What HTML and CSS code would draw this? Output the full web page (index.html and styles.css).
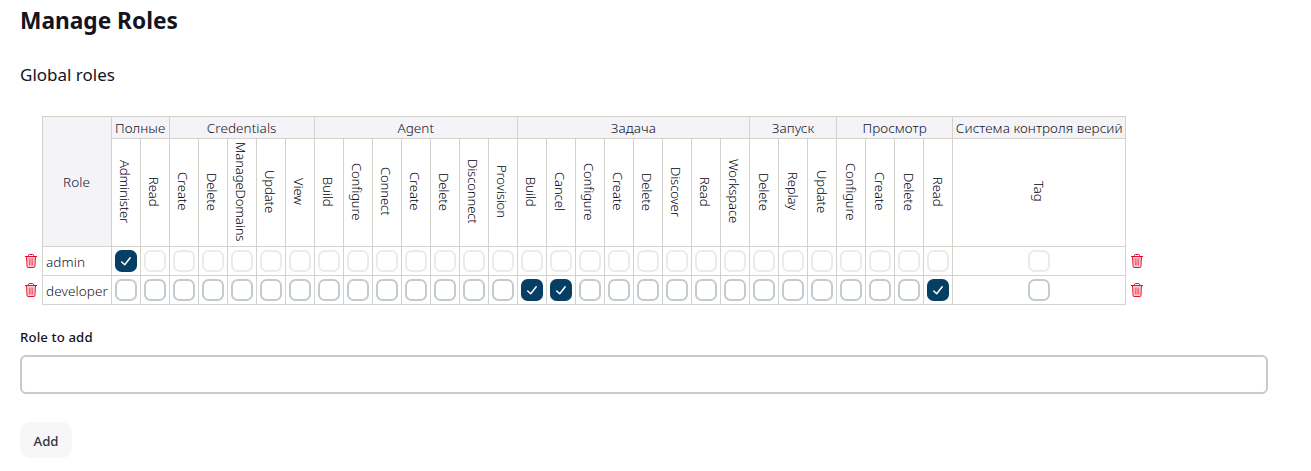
FILE: index.html
```html
<!DOCTYPE html>
<html lang="ru">
<head>
<meta charset="utf-8">
<title>Manage Roles</title>
<link rel="stylesheet" href="styles.css">
</head>
<body>
<svg class="defs" width="0" height="0">
  <symbol id="trash" viewBox="0 0 12 16">
    <path d="M2 3.500h8l-.5 10.500h-7z" fill="#e6001f" fill-opacity=".2"/>
    <path d="M4.200 5.500l.3 7M6 5.500v7M7.800 5.500l-.3 7" fill="none" stroke="#e6001f" stroke-width=".7" stroke-opacity=".8"/>
    <path d="M0 3.500h12M3.500 3.500V2.500Q3.500 1.500 4.500 1.500h3q1 0 1 1v1M1.500 3.500l.6 10q.1 1 1 1h5.800q.9 0 1-1l.6-10" fill="none" stroke="#e6001f" stroke-width=".95"/>
  </symbol>
  <symbol id="check" viewBox="0 0 22 22">
    <path d="M6.700 12l3 2.800 5.500-7" fill="none" stroke="#fff" stroke-width="1.500" stroke-linecap="round" stroke-linejoin="round"/>
  </symbol>
</svg>
<main class="page">
  <h1 class="title">Manage Roles</h1>
  <h2 class="section">Global roles</h2>
  <table class="matrix">
    <colgroup><col class="c-icon"><col class="c-role"><col class="c-perm" span="29"><col class="c-last"><col class="c-icon"></colgroup>
    <thead></thead>
    <tbody></tbody>
  </table>
  <label class="label" for="role">Role to add</label>
  <input class="field" id="role" type="text">
  <button class="button" type="button">Add</button>
</main>
<script src="matrix.js"></script>
</body>
</html>
```
FILE: matrix.js
```js
const groups = [
  ["Полные", ["Administer", "Read"]],
  ["Credentials", ["Create", "Delete", "ManageDomains", "Update", "View"]],
  ["Agent", ["Build", "Configure", "Connect", "Create", "Delete", "Disconnect", "Provision"]],
  ["Задача", ["Build", "Cancel", "Configure", "Create", "Delete", "Discover", "Read", "Workspace"]],
  ["Запуск", ["Delete", "Replay", "Update"]],
  ["Просмотр", ["Configure", "Create", "Delete", "Read"]],
  ["Система контроля версий", ["Tag"]],
];
const roles = [
  { name: "admin", checked: [0], implied: true },
  { name: "developer", checked: [14, 15, 28], implied: false },
];
const permissions = groups.flatMap(([, names]) => names);
const trash = '<td class="action"><svg class="trash"><use href="#trash"/></svg></td>';

document.querySelector(".matrix thead").innerHTML =
  '<tr class="groups"><td class="action" rowspan="2"></td><th class="group" rowspan="2">Role</th>' +
  groups.map(([name, items]) => `<th class="group" colspan="${items.length}">${name}</th>`).join("") +
  '<td class="action" rowspan="2"></td></tr><tr class="names">' +
  permissions.map((name) => `<th class="perm"><span class="vertical">${name}</span></th>`).join("") +
  "</tr>";

document.querySelector(".matrix tbody").innerHTML = roles.map((role) =>
  `<tr class="role">${trash}<td class="name">${role.name}</td>` +
  permissions.map((_, i) => {
    if (role.checked.includes(i)) {
      return '<td class="cell"><svg class="box on"><use href="#check"/></svg></td>';
    }
    return `<td class="cell"><span class="box${role.implied ? " implied" : ""}"></span></td>`;
  }).join("") + `${trash}</tr>`).join("");
```
FILE: styles.css
```css
body { margin: 0; background: #fff; color: #14141f; font-family: "Noto Sans", sans-serif; font-size: 13px; }
.defs { display: block; }
.page { padding: 0 43px 0 20px; }
.title { margin: 0; padding-top: 5px; font-size: 22.700px; line-height: 32px; font-weight: 700; }
.section { margin: 26px 0 0; font-size: 17px; line-height: 24px; font-weight: 400; }
.matrix { margin-top: 29px; width: 1128px; table-layout: fixed; border-collapse: collapse; font-size: 13.500px; }
.c-icon { width: 22px; }
.c-role { width: 69px; }
.c-perm { width: 29px; }
.c-last { width: 173px; }
.matrix th, .matrix td { padding: 0; border: 1px solid #d3d3cc; font-weight: 300; text-align: center; white-space: nowrap; box-sizing: border-box; }
.matrix .action { border: 0; }
.groups { height: 22px; }
.names { height: 108px; }
.role { height: 29px; }
.matrix .group { background: #f3f3f8; line-height: 20px; letter-spacing: .07px; }
.matrix .name { padding: 2px 0 0 3.500px; text-align: left; line-height: 20px; letter-spacing: .1px; }
.vertical { display: inline-block; writing-mode: vertical-rl; margin: 0 1px 2px 0; color: #000010; font-size: 13px; line-height: 18px; letter-spacing: -.08px; vertical-align: middle; }
.box { display: block; width: 22px; height: 22px; margin: 0 auto; box-sizing: border-box; border: 2px solid #c1cbd0; border-radius: 6.600px; background: #fff; }
.implied { border-color: #e7ecef; }
.on { border: 0; background: #063f63; }
.trash { display: block; width: 12px; height: 16px; margin: 0 auto; }
.label { display: block; margin-top: 22px; line-height: 20px; font-weight: 500; font-size: 13.200px; letter-spacing: .12px; }
.field { display: block; width: 100%; height: 39px; margin-top: 8px; box-sizing: border-box; border: 2px solid #c1cbd0; border-radius: 6px; background: #fff; outline: 0; }
.button { display: block; width: 52px; height: 36px; margin-top: 28px; padding: 2px 0 0; border: 0; border-radius: 10px; background: #f7f7fa; color: #333340; font: 500 13.200px "Noto Sans", sans-serif; }
```
